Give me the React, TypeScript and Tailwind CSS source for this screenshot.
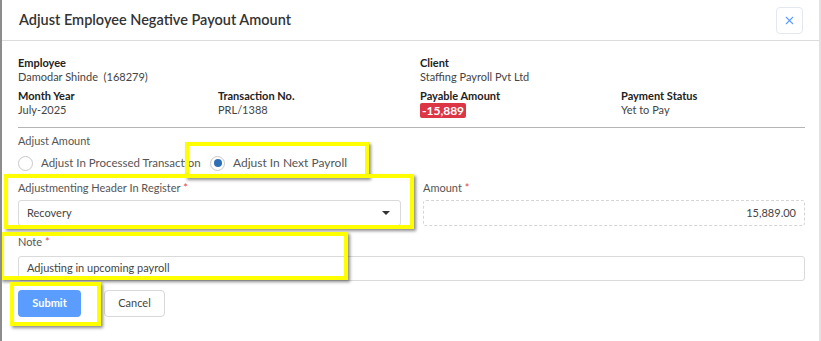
import { X } from "lucide-react";

function Info({ label, children }: { label: string; children: React.ReactNode }) {
  return (
    <div className="text-[11px] leading-[14px]">
      <div className="font-bold text-[#222]">{label}</div>
      <div className="text-[#444]">{children}</div>
    </div>
  );
}

function Radio({ checked, label, className = "" }: { checked?: boolean; label: string; className?: string }) {
  return (
    <label className={`flex items-center gap-[8px] whitespace-nowrap leading-[16px] text-[#555] ${className}`}>
      <span className="flex h-[15px] w-[15px] shrink-0 items-center justify-center rounded-full border border-[#c8c8c8] bg-white">
        {checked && <span className="h-[8px] w-[8px] rounded-full bg-[#2f6fb6]" />}
      </span>
      {label}
    </label>
  );
}

function Frame({ className }: { className: string }) {
  return (
    <div
      className={`pointer-events-none absolute border-[4px] border-[#ffff00] shadow-[2px_2px_3px_rgba(0,0,0,0.45)] ${className}`}
    />
  );
}

export default function App() {
  return (
    <div className="relative h-[341px] w-[821px] overflow-hidden border-l-2 border-r-2 border-l-[#8c8c8c] border-r-[#e2e2e2] bg-white font-['Lato',sans-serif]">
      <div className="flex h-[41px] items-center justify-between border-b border-[#dcdcdc] pl-[17px] pr-[16px]">
        <h2 className="text-[14.5px] font-semibold text-[#333]">Adjust Employee Negative Payout Amount</h2>
        <button className="flex h-[27px] w-[27px] items-center justify-center rounded border border-[#e3e8f0] text-[#5b9dff]">
          <X size={13} strokeWidth={2} />
        </button>
      </div>

      <div className="pl-[16px] pr-[14px] pt-[15px]">
        <div className="grid grid-cols-[200px_202px_201px_1fr] gap-y-[5px]">
          <Info label="Employee">Damodar Shinde&nbsp; (168279)</Info>
          <div />
          <Info label="Client">Staffing Payroll Pvt Ltd</Info>
          <div />
          <Info label="Month Year">July-2025</Info>
          <Info label="Transaction No.">PRL/1388</Info>
          <div className="text-[11px] leading-[14px]">
            <div className="font-bold text-[#222]">Payable Amount</div>
            <div className="inline-block rounded-[2px] bg-[#dc3545] px-[2px] text-[12px] leading-[15px] font-bold text-white">
              -15,889
            </div>
          </div>
          <Info label="Payment Status">Yet to Pay</Info>
        </div>

        <div className="mt-[9px] border-b border-[#b5b5b5]" />

        <div className="mt-[6px] text-[11px] leading-[14px] text-[#555]">Adjust Amount</div>
        <div className="mt-[7px] flex">
          <Radio className="w-[192px] text-[11.5px]" label="Adjust In Processed Transaction" />
          <Radio checked className="text-[12px]" label="Adjust In Next Payroll" />
        </div>

        <div className="mt-[10px] flex gap-[22px]">
          <div className="w-[383px]">
            <div className="text-[11px] leading-[14px] text-[#555]">
              Adjustmenting Header In Register <span className="text-[#e04b4b]">*</span>
            </div>
            <div className="mt-[5px] flex h-[26px] items-center justify-between rounded-[3px] border border-[#dadada] pl-[8px] pr-[10px] text-[11px] text-[#444]">
              Recovery
              <span className="h-0 w-0 border-x-[4px] border-t-[4px] border-x-transparent border-t-[#333]" />
            </div>
          </div>
          <div className="flex-1">
            <div className="text-[11px] leading-[14px] text-[#555]">
              Amount <span className="text-[#e04b4b]">*</span>
            </div>
            <div className="mt-[5px] flex h-[26px] items-center justify-end rounded-[3px] border border-dashed border-[#d6d6d6] pr-[8px] text-[11px] text-[#444]">
              15,889.00
            </div>
          </div>
        </div>

        <div className="mt-[9px] text-[11px] leading-[14px] text-[#555]">
          Note <span className="text-[#e04b4b]">*</span>
        </div>
        <div className="mt-[7px] flex h-[25px] items-center rounded-[3px] border border-[#dadada] pl-[8px] text-[11px] text-[#444]">
          Adjusting in upcoming payroll
        </div>

        <div className="mt-[9px] flex gap-[23px]">
          <button className="h-[27px] w-[63px] rounded-[4px] bg-[#5b9dff] text-[11px] font-bold text-white">Submit</button>
          <button className="h-[27px] w-[61px] rounded-[4px] border border-[#d8d8d8] bg-white text-[11px] text-[#444]">
            Cancel
          </button>
        </div>
      </div>

      <Frame className="left-[183px] top-[142px] h-[36px] w-[184px]" />
      <Frame className="left-[2px] top-[174px] h-[55px] w-[410px]" />
      <Frame className="left-[-2px] top-[232px] h-[48px] w-[348px]" />
      <Frame className="left-[8px] top-[282px] h-[44px] w-[91px]" />
    </div>
  );
}
